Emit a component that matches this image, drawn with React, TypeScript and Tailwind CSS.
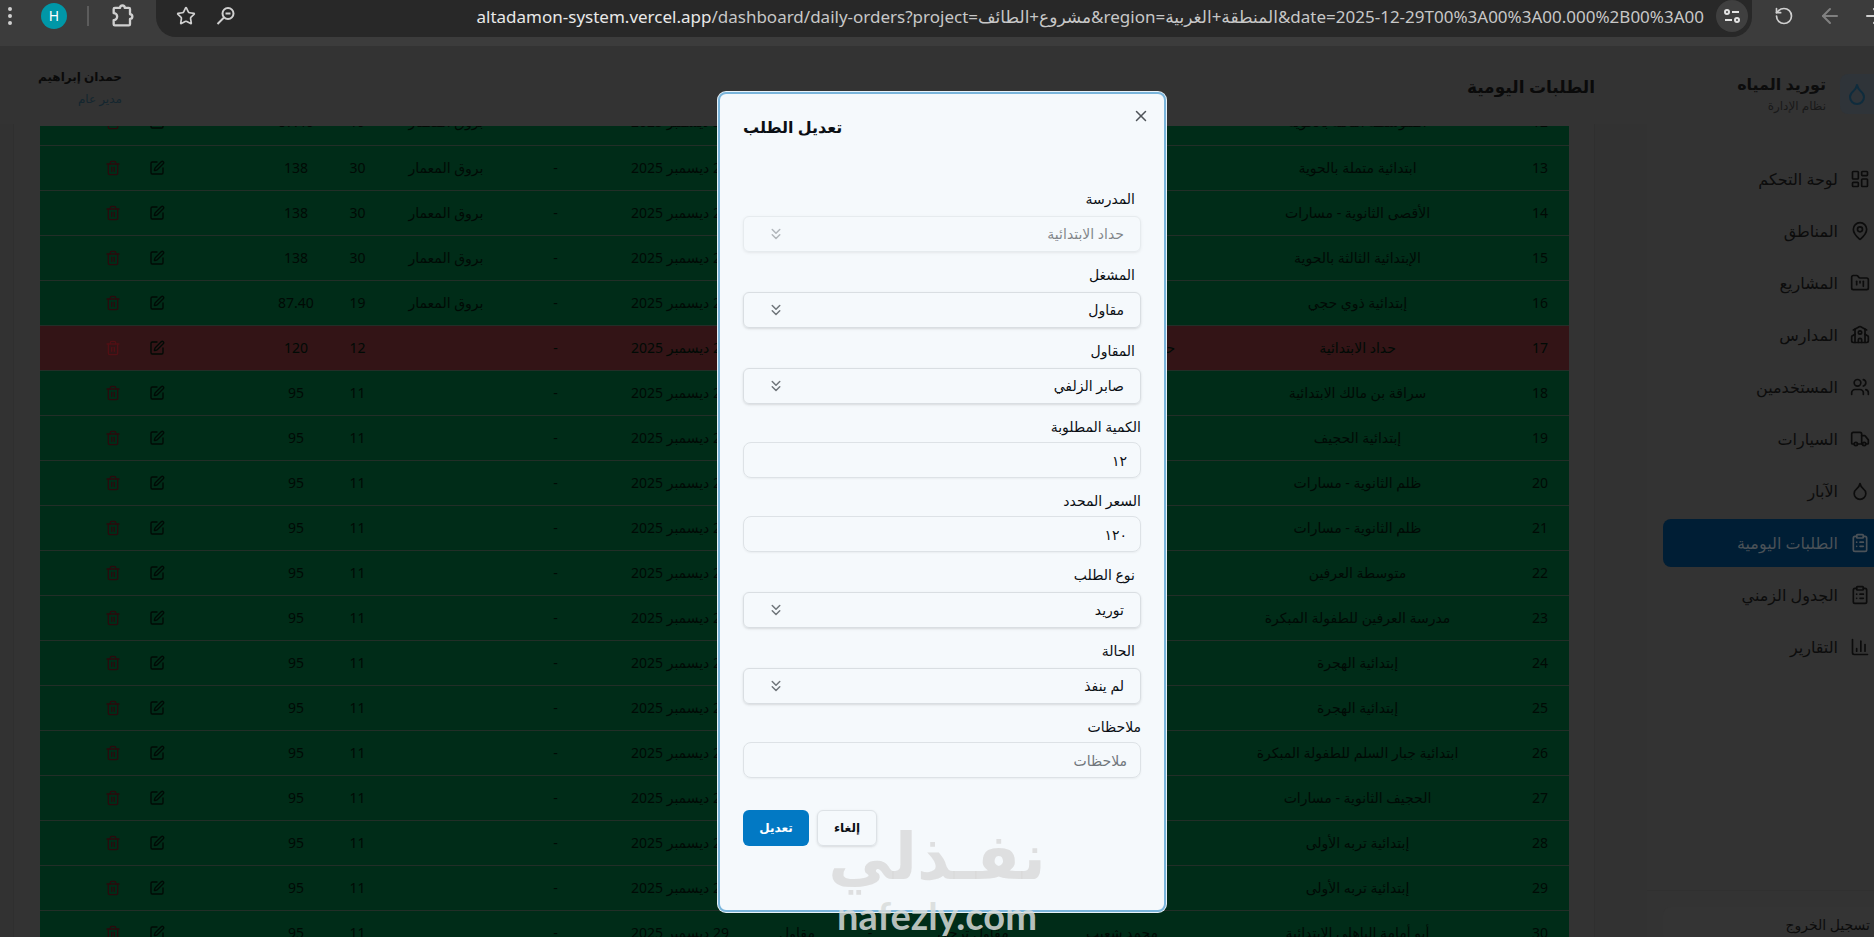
import clsx from "clsx";
import {
  ArrowLeft,
  ArrowRight,
  ChartColumn,
  ChevronsDown,
  ClipboardList,
  Droplet,
  EllipsisVertical,
  FolderKanban,
  LayoutDashboard,
  MapPin,
  RotateCcw,
  School,
  SquarePen,
  Star,
  Trash2,
  Truck,
  Users,
  X,
} from "lucide-react";
import type { LucideIcon } from "lucide-react";
import { useState } from "react";

type Order = {
  id: number;
  school: string;
  client?: string;
  company?: string;
  quantity: string;
  price: string;
  pending?: boolean;
};

const orders: Order[] = [
  { id: 12, school: "المتوسطة الثالثة بالحوية", company: "بروق المعمار", quantity: "19", price: "87.40" },
  { id: 13, school: "ابتدائية متملة بالحوية", company: "بروق المعمار", quantity: "30", price: "138" },
  { id: 14, school: "الأقصى الثانوية - مسارات", company: "بروق المعمار", quantity: "30", price: "138" },
  { id: 15, school: "الإبتدائية الثالثة بالحوية", company: "بروق المعمار", quantity: "30", price: "138" },
  { id: 16, school: "إبتدائية ذوي حجي", company: "بروق المعمار", quantity: "19", price: "87.40" },
  { id: 17, school: "حداد الابتدائية", client: "حداد بني مالك نقل", quantity: "12", price: "120", pending: true },
  { id: 18, school: "سراقة بن مالك الابتدائية", quantity: "11", price: "95" },
  { id: 19, school: "إبتدائية الحجيف", quantity: "11", price: "95" },
  { id: 20, school: "ظلم الثانوية - مسارات", quantity: "11", price: "95" },
  { id: 21, school: "ظلم الثانوية - مسارات", quantity: "11", price: "95" },
  { id: 22, school: "متوسطة العرفين", quantity: "11", price: "95" },
  { id: 23, school: "مدرسة العرفين للطفولة المبكرة", quantity: "11", price: "95" },
  { id: 24, school: "إبتدائية الهجرة", quantity: "11", price: "95" },
  { id: 25, school: "إبتدائية الهجرة", quantity: "11", price: "95" },
  { id: 26, school: "ابتدائية جبار السلم للطفولة المبكرة", quantity: "11", price: "95" },
  { id: 27, school: "الحجيف الثانوية - مسارات", quantity: "11", price: "95" },
  { id: 28, school: "إبتدائية تربه الأولى", quantity: "11", price: "95" },
  { id: 29, school: "إبتدائية تربه الأولى", quantity: "11", price: "95" },
  { id: 30, school: "أبو أمامة الباهلي الابتدائية", quantity: "11", price: "95" },
];

const navItems: { label: string; icon: LucideIcon; active?: boolean }[] = [
  { label: "لوحة التحكم", icon: LayoutDashboard },
  { label: "المناطق", icon: MapPin },
  { label: "المشاريع", icon: FolderKanban },
  { label: "المدارس", icon: School },
  { label: "المستخدمين", icon: Users },
  { label: "السيارات", icon: Truck },
  { label: "الآبار", icon: Droplet },
  { label: "الطلبات اليومية", icon: ClipboardList, active: true },
  { label: "الجدول الزمني", icon: ClipboardList },
  { label: "التقارير", icon: ChartColumn },
];

const BrowserBar = () => (
  <div dir="ltr" className="flex h-[46px] shrink-0 items-start bg-[#3c3c3c] text-[#d0d0d0]">
    <div className="flex h-8 w-[156px] shrink-0 items-center">
      <button aria-label="Menu" className="-ml-1 flex w-7 justify-center">
        <EllipsisVertical className="size-6" strokeWidth={2} />
      </button>
      <button className="ml-[17px] size-[26px] rounded-full bg-[#0097a7] text-sm text-white">H</button>
      <div className="ml-5 h-5 w-0.5 bg-[#5c5c5c]" />
      <button aria-label="Extensions" className="ml-5">
        <svg viewBox="0 0 24 24" className="size-7" fill="none" stroke="currentColor" strokeWidth={2}>
          <path
            d="M5 5h4.500a2 2 0 0 1 4 0H17a1 1 0 0 1 1 1v4.500a2 2 0 0 1 0 4V19a1 1 0 0 1-1 1H5a1 1 0 0 1-1-1v-3.500a3 3 0 0 0 0-6V6a1 1 0 0 1 1-1z"
            strokeLinejoin="round"
          />
        </svg>
      </button>
    </div>
    <div className="flex h-[37px] min-w-0 flex-1 items-start rounded-b-[20px] bg-[#282828] pr-1 pl-5">
      <div className="flex h-8 shrink-0 items-center gap-5">
        <button aria-label="Bookmark">
          <Star className="size-5" />
        </button>
        <button aria-label="Zoom">
          <svg viewBox="0 0 20 20" className="size-5" fill="none" stroke="currentColor" strokeWidth={2}>
            <circle cx="12" cy="7.500" r="5.500" />
            <path d="M9.500 7.500h5M8 11.500 1.500 18" />
          </svg>
        </button>
      </div>
      <div className="flex h-[34px] min-w-0 flex-1 items-center justify-end overflow-hidden pr-3 font-['Noto_Sans','DejaVu_Sans',sans-serif] text-[17px] whitespace-nowrap text-[#c7c7c7]">
        <span>
          <span className="text-[#e8e8e8]">altadamon-system.vercel.app</span>
          /dashboard/daily-orders?project=<bdi>مشروع+الطائف</bdi>&amp;region=<bdi>المنطقة+الغربية</bdi>
          &amp;date=2025-12-29T00%3A00%3A00.000%2B00%3A00
        </span>
      </div>
      <button aria-label="Site information" className="flex size-8 shrink-0 items-center justify-center rounded-full bg-[#3f3f3f]">
        <svg viewBox="0 0 20 20" className="size-5" fill="none" stroke="#e3e3e3" strokeWidth={2}>
          <circle cx="5" cy="6" r="2" />
          <path d="M10 6h7M3 14h7" />
          <circle cx="15" cy="14" r="2" />
        </svg>
      </button>
    </div>
    <div className="flex h-8 w-[122px] shrink-0 items-center gap-6 overflow-hidden pl-[22px]">
      <button aria-label="Reload">
        <RotateCcw className="size-5" />
      </button>
      <button aria-label="Back" className="text-[#808080]">
        <ArrowLeft className="size-6" />
      </button>
      <button aria-label="Forward" className="-ml-1">
        <ArrowRight className="size-6" />
      </button>
    </div>
  </div>
);

const Sidebar = () => (
  <aside className="flex w-[227px] shrink-0 flex-col bg-[#333333] text-[#0c0c0c]">
    <div className="flex h-[92px] items-center gap-[14px] pt-1">
      <div className="flex h-10 w-[34px] items-center justify-center rounded-l-lg bg-[#2f3439]">
        <Droplet className="size-6 text-[#0f2c3d]" />
      </div>
      <div>
        <p className="text-base leading-6 font-bold">توريد المياه</p>
        <p className="text-xs leading-5 text-[#191919]">نظام الإدارة</p>
      </div>
    </div>
    <nav className="flex flex-1 flex-col gap-1 pt-[17px] pl-4">
      {navItems.map(({ label, icon: Icon, active }) => (
        <a
          key={label}
          href="#"
          className={clsx(
            "flex h-12 items-center gap-3 rounded-l-lg pr-1 text-base font-medium",
            active && "bg-[#001e35] text-[#4b5258]",
          )}
        >
          <Icon className="size-5" />
          {label}
        </a>
      ))}
    </nav>
    <div className="h-[47px] shrink-0 border-t border-[#303030] pt-4 pl-4">
      <button className="h-9 w-full rounded-l-lg bg-[#343434] pr-1 text-right text-sm font-medium">
        تسجيل الخروج
      </button>
    </div>
  </aside>
);

const OrderRow = ({ order }: { order: Order }) => (
  <tr
    className={clsx(
      "h-[45px] border-b border-[#222e27]",
      order.pending ? "bg-[#331416]" : "bg-[#002c18]",
    )}
  >
    <td>{order.id}</td>
    <td>{order.school}</td>
    <td>{order.client ?? "محمد شعيب"}</td>
    <td>مقاول ترجي</td>
    <td>-</td>
    <td>مقاول</td>
    <td>29 ديسمبر 2025</td>
    <td>-</td>
    <td>{order.company}</td>
    <td>{order.quantity}</td>
    <td>{order.price}</td>
    <td>
      <div className="flex items-center justify-center gap-7 pr-7">
        <button aria-label="تعديل">
          <SquarePen className="size-4" />
        </button>
        <button aria-label="حذف" className={order.pending ? "text-[#520f14]" : "text-[#290b0d]"}>
          <Trash2 className="size-4" />
        </button>
      </div>
    </td>
  </tr>
);

const OrdersTable = () => (
  <table className="w-full table-fixed border-collapse text-center text-sm text-[#000a05]">
    <colgroup>
      <col className="w-[58px]" />
      <col className="w-[307px]" />
      <col className="w-[164px]" />
      <col className="w-[134px]" />
      <col className="w-[72px]" />
      <col className="w-[74px]" />
      <col className="w-[160px]" />
      <col className="w-[89px]" />
      <col className="w-[130px]" />
      <col className="w-[47px]" />
      <col className="w-[76px]" />
      <col className="w-[218px]" />
    </colgroup>
    <tbody>
      {orders.map((order) => (
        <OrderRow key={order.id} order={order} />
      ))}
    </tbody>
  </table>
);

const SelectField = ({
  id,
  label,
  options,
  disabled,
}: {
  id: string;
  label: string;
  options: string[];
  disabled?: boolean;
}) => (
  <div className="flex flex-col gap-[10px]">
    <label htmlFor={id} className="pr-[6px] text-sm leading-[14px] font-medium">
      {label}
    </label>
    <div className={clsx("grid items-center", disabled && "opacity-50")}>
      <select
        id={id}
        disabled={disabled}
        className="col-start-1 row-start-1 h-9 w-full appearance-none rounded-md border border-[#d9dee2] pr-4 pl-12 text-sm font-medium shadow-sm"
      >
        {options.map((option) => (
          <option key={option}>{option}</option>
        ))}
      </select>
      <ChevronsDown
        className="pointer-events-none col-start-1 row-start-1 ml-6 size-[18px] justify-self-end text-[#70767b]"
        strokeWidth={2}
      />
    </div>
  </div>
);

const InputField = ({
  id,
  label,
  value,
  placeholder,
}: {
  id: string;
  label: string;
  value?: string;
  placeholder?: string;
}) => {
  const [text, setText] = useState(value ?? "");
  return (
    <div className="flex flex-col gap-2">
      <label htmlFor={id} className="text-sm leading-[14px] font-medium">
        {label}
      </label>
      <input
        id={id}
        value={text}
        placeholder={placeholder}
        onChange={(e) => setText(e.target.value)}
        className="h-9 w-full rounded-lg border border-[#dde2e6] px-[13px] text-sm shadow-xs placeholder:text-[#70767b]"
      />
    </div>
  );
};

const EditOrderDialog = () => (
  <div
    role="dialog"
    aria-labelledby="dialog-title"
    className="w-full max-w-md rounded-lg border-2 border-[#7ab5db] bg-[#f5f9fc] px-[23px] pt-[13px] pb-16 text-[#0b0f14] ring-1 ring-[#e8f2f9]"
  >
    <div className="flex items-start justify-between">
      <button aria-label="إغلاق" className="-mr-[9px] text-[#4f5459]">
        <X className="size-[18px]" strokeWidth={2} />
      </button>
      <h2 id="dialog-title" className="pt-2 text-base leading-6 font-semibold">
        تعديل الطلب
      </h2>
    </div>
    <form className="flex flex-col gap-4 pt-[53px]" onSubmit={(e) => e.preventDefault()}>
      <SelectField id="school" label="المدرسة" options={["حداد الابتدائية"]} disabled />
      <SelectField id="operator" label="المشغل" options={["مقاول"]} />
      <SelectField id="contractor" label="المقاول" options={["صابر الزلفي"]} />
      <InputField id="quantity" label="الكمية المطلوبة" value="١٢" />
      <InputField id="price" label="السعر المحدد" value="١٢٠" />
      <SelectField id="type" label="نوع الطلب" options={["توريد"]} />
      <SelectField id="status" label="الحالة" options={["لم ينفذ"]} />
      <InputField id="notes" label="ملاحظات" placeholder="ملاحظات" />
      <div className="flex justify-end gap-2 pt-4 text-xs font-semibold">
        <button type="button" className="h-9 w-[60px] rounded-md border border-[#dde2e6] shadow-sm">
          إلغاء
        </button>
        <button type="submit" className="h-9 w-[66px] rounded-md bg-[#0279c4] text-white">
          تعديل
        </button>
      </div>
    </form>
  </div>
);

const Watermark = () => (
  <div className="pointer-events-none absolute inset-x-0 bottom-0 flex flex-col items-center pb-1 font-bold">
    <span className="text-[64px] leading-[84px] text-[#d8d8d8]/80">نفـذلي</span>
    <span dir="ltr" className="font-['Lato',sans-serif] text-[38px] leading-9 text-[#d8dcda]/85">
      nafezly.com
    </span>
  </div>
);

export default function App() {
  return (
    <div
      dir="rtl"
      className="relative flex h-screen flex-col overflow-hidden bg-[#333333] font-['Noto_Sans','DejaVu_Sans',sans-serif]"
    >
      <BrowserBar />
      <div className="flex min-h-0 flex-1">
        <Sidebar />
        <div className="flex min-w-0 flex-1 flex-col">
          <header className="flex h-[78px] shrink-0 items-center justify-between pt-1 pr-[52px] pl-[38px]">
            <h1 className="text-[17px] font-bold text-[#0a0a0a]">الطلبات اليومية</h1>
            <div>
              <p className="text-xs leading-6 font-semibold text-[#0a0a0a]">حمدان إبراهيم</p>
              <p className="text-xs leading-5 text-[#14262f]">مدير عام</p>
            </div>
          </header>
          <main className="min-h-0 flex-1 bg-[#323232] pr-[52px] pl-[13px]">
            <div className="flex h-full flex-col overflow-hidden border-x border-[#2f2f2f] bg-[#333333] pt-0.5 pr-[25px] pl-[26px]">
              {/* scrolled to the middle of the list */}
              <div className="min-h-0 flex-1 overflow-hidden">
                <div className="-mt-[26px]">
                  <OrdersTable />
                </div>
              </div>
            </div>
          </main>
        </div>
      </div>

      <div className="absolute inset-x-0 top-[46px] bottom-0 flex items-start justify-center overflow-hidden pt-[46px] pl-[10px]">
        <EditOrderDialog />
        <Watermark />
      </div>
    </div>
  );
}
